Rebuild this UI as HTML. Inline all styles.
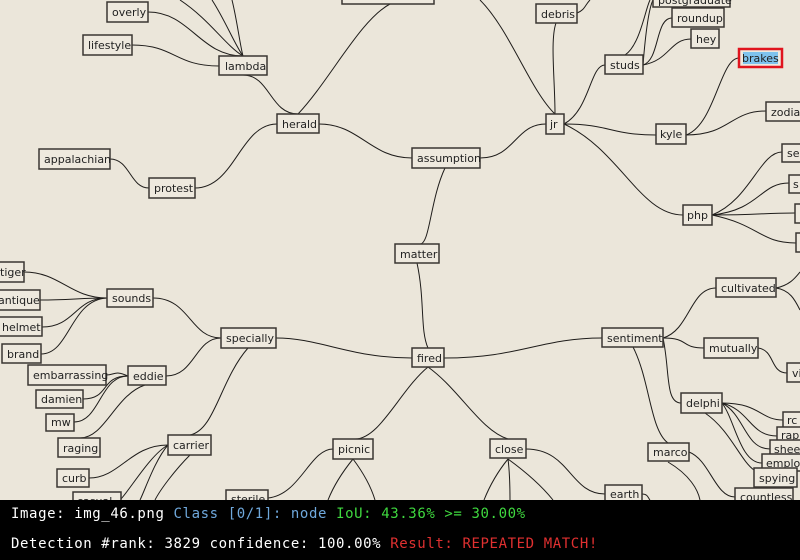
<!DOCTYPE html>
<html><head><meta charset="utf-8"><style>
html,body{margin:0;padding:0;width:800px;height:560px;overflow:hidden;background:#ebe6da;}
svg{display:block}
.n rect{fill:#eee9de;stroke:#3a3632;stroke-width:1.5}
.n text{font-family:"DejaVu Sans","Liberation Sans",sans-serif;font-size:11px;fill:#222;}
.e path{fill:none;stroke:#1e1c1a;stroke-width:1}
#bar{position:absolute;left:0;top:500px;width:800px;height:60px;background:#000;font-family:"DejaVu Sans Mono","Liberation Mono",monospace;font-size:14px;letter-spacing:0.6px;color:#fff;}
#bar div{position:absolute;left:11px;white-space:pre}
</style></head><body>
<svg width="800" height="500" viewBox="0 0 800 500">
<g class="e">
<path d="M243 75 C270 75,270 114,298 114"/>
<path d="M298 114 C330 80,360 20,390 4"/>
<path d="M319 124 C360 124,370 158,412 158"/>
<path d="M195 188 C235 188,240 124,277 124"/>
<path d="M110 159 C130 159,130 188,149 188"/>
<path d="M132 45 C175 45,175 66,219 66"/>
<path d="M148 12 C190 12,200 56,243 56"/>
<path d="M180 0 C210 20,225 45,243 56"/>
<path d="M212 0 C225 20,235 45,243 56"/>
<path d="M232 0 C237 20,240 45,243 56"/>
<path d="M480 158 C515 158,515 124,546 124"/>
<path d="M445 168 C430 200,430 244,420 244"/>
<path d="M417 263 C425 300,420 330,428 348"/>
<path d="M555 114 C555 80,550 40,556 23"/>
<path d="M480 0 C510 30,530 90,555 114"/>
<path d="M564 124 C590 110,590 65,605 65"/>
<path d="M564 124 C610 124,610 135,656 135"/>
<path d="M564 124 C620 150,640 215,683 215"/>
<path d="M625 55 C640 45,645 10,650 0"/>
<path d="M643 65 C660 60,655 18,672 18"/>
<path d="M643 65 C670 60,670 39,691 39"/>
<path d="M643 65 C645 40,648 10,653 0"/>
<path d="M686 135 C715 125,720 58,739 58"/>
<path d="M686 135 C730 135,730 111,766 111"/>
<path d="M712 215 C750 200,760 152,782 152"/>
<path d="M712 215 C760 210,760 183,789 183"/>
<path d="M712 215 C760 215,760 213,795 213"/>
<path d="M712 215 C760 225,760 243,796 243"/>
<path d="M577 13 C585 10,585 5,590 0"/>
<path d="M107 298 C70 298,60 272,24 272"/>
<path d="M107 298 C80 298,70 300,40 300"/>
<path d="M107 298 C75 298,75 327,42 327"/>
<path d="M107 298 C70 300,70 354,41 354"/>
<path d="M153 298 C190 298,190 338,221 338"/>
<path d="M166 376 C195 376,195 338,221 338"/>
<path d="M128 376 C115 370,115 375,106 375"/>
<path d="M128 376 C100 376,110 399,83 399"/>
<path d="M128 376 C100 376,100 422,74 422"/>
<path d="M145 385 C115 395,105 438,80 438"/>
<path d="M248 348 C220 380,215 430,190 435"/>
<path d="M168 445 C130 445,120 478,89 478"/>
<path d="M168 445 C150 455,130 490,120 500"/>
<path d="M168 445 C155 460,145 490,140 500"/>
<path d="M190 455 C175 470,160 490,155 500"/>
<path d="M412 358 C350 358,320 338,276 338"/>
<path d="M444 358 C520 358,540 338,602 338"/>
<path d="M428 367 C400 390,380 439,355 439"/>
<path d="M428 367 C460 390,480 430,508 439"/>
<path d="M268 498 C300 495,310 449,333 449"/>
<path d="M353 459 C340 475,332 490,328 500"/>
<path d="M353 459 C365 475,372 490,375 500"/>
<path d="M508 459 C495 475,488 490,484 500"/>
<path d="M508 459 C510 475,510 490,510 500"/>
<path d="M508 459 C530 475,545 490,553 500"/>
<path d="M526 449 C570 449,570 494,605 494"/>
<path d="M663 338 C690 330,690 288,716 288"/>
<path d="M663 338 C690 338,680 348,704 348"/>
<path d="M663 338 C670 370,665 403,681 403"/>
<path d="M633 347 C650 380,650 430,668 443"/>
<path d="M776 288 C790 285,795 278,800 272"/>
<path d="M776 288 C790 290,795 300,800 310"/>
<path d="M758 348 C775 350,770 373,787 373"/>
<path d="M722 403 C760 403,760 420,783 420"/>
<path d="M722 403 C750 410,750 436,777 436"/>
<path d="M722 403 C745 415,745 449,770 449"/>
<path d="M722 403 C735 420,740 463,762 463"/>
<path d="M705 413 C730 430,740 460,754 470"/>
<path d="M689 452 C710 460,715 497,735 497"/>
<path d="M668 462 C690 475,698 490,700 500"/>
<path d="M642 494 C648 494,648 498,650 500"/>
</g>
<g class="n">
<rect x="342" y="-10" width="92" height="14"/>
<rect x="653" y="-10" width="77" height="17"/><text x="658" y="4">postgraduate</text>
<rect x="107" y="2" width="41" height="20"/><text x="112" y="16">overly</text>
<rect x="83" y="35" width="49" height="20"/><text x="88" y="49">lifestyle</text>
<rect x="219" y="56" width="48" height="19"/><text x="225" y="70">lambda</text>
<rect x="277" y="114" width="42" height="19"/><text x="282" y="128">herald</text>
<rect x="39" y="149" width="71" height="20"/><text x="44" y="163">appalachian</text>
<rect x="149" y="178" width="46" height="20"/><text x="154" y="192">protest</text>
<rect x="412" y="148" width="68" height="20"/><text x="417" y="162">assumption</text>
<rect x="395" y="244" width="44" height="19"/><text x="400" y="258">matter</text>
<rect x="536" y="4" width="41" height="19"/><text x="541" y="18">debris</text>
<rect x="672" y="8" width="52" height="19"/><text x="677" y="22">roundup</text>
<rect x="691" y="29" width="28" height="19"/><text x="696" y="43">hey</text>
<rect x="605" y="55" width="38" height="19"/><text x="610" y="69">studs</text>
<rect x="739" y="49" width="43" height="18" style="stroke:#e0141e;stroke-width:2.5"/>
<rect x="743" y="52" width="35" height="12" style="fill:#7ec3ee;stroke:none"/><text x="742" y="62">brakes</text>
<rect x="546" y="114" width="18" height="20"/><text x="550" y="128">jr</text>
<rect x="766" y="102" width="40" height="19"/><text x="771" y="116">zodiac</text>
<rect x="656" y="124" width="30" height="20"/><text x="660" y="138">kyle</text>
<rect x="782" y="144" width="30" height="18"/><text x="787" y="157">sec</text>
<rect x="789" y="175" width="20" height="18"/><text x="793" y="188">s</text>
<rect x="683" y="205" width="29" height="20"/><text x="687" y="219">php</text>
<rect x="795" y="204" width="20" height="19"/>
<rect x="796" y="233" width="20" height="19"/>
<rect x="-5" y="262" width="29" height="20"/><text x="0" y="276">tiger</text>
<rect x="-5" y="290" width="45" height="20"/><text x="-2" y="304">antique</text>
<rect x="-5" y="317" width="47" height="19"/><text x="2" y="331">helmet</text>
<rect x="2" y="344" width="39" height="19"/><text x="7" y="358">brand</text>
<rect x="107" y="289" width="46" height="18"/><text x="112" y="302">sounds</text>
<rect x="221" y="328" width="55" height="20"/><text x="226" y="342">specially</text>
<rect x="28" y="365" width="78" height="20"/><text x="33" y="379">embarrassing</text>
<rect x="128" y="366" width="38" height="19"/><text x="133" y="380">eddie</text>
<rect x="36" y="390" width="47" height="18"/><text x="41" y="403">damien</text>
<rect x="46" y="414" width="28" height="17"/><text x="51" y="426">mw</text>
<rect x="58" y="438" width="42" height="19"/><text x="63" y="452">raging</text>
<rect x="168" y="435" width="43" height="20"/><text x="173" y="449">carrier</text>
<rect x="57" y="469" width="32" height="18"/><text x="62" y="482">curb</text>
<rect x="73" y="492" width="48" height="18"/><text x="77" y="505">casual</text>
<rect x="226" y="490" width="42" height="18"/><text x="231" y="503">sterile</text>
<rect x="333" y="439" width="40" height="20"/><text x="338" y="453">picnic</text>
<rect x="412" y="348" width="32" height="19"/><text x="417" y="362">fired</text>
<rect x="602" y="328" width="61" height="19"/><text x="607" y="342">sentiment</text>
<rect x="716" y="278" width="60" height="19"/><text x="721" y="292">cultivated</text>
<rect x="704" y="338" width="54" height="20"/><text x="709" y="352">mutually</text>
<rect x="787" y="363" width="25" height="19"/><text x="792" y="377">vi</text>
<rect x="681" y="393" width="41" height="20"/><text x="686" y="407">delphi</text>
<rect x="783" y="412" width="25" height="17"/><text x="787" y="424">rc</text>
<rect x="777" y="427" width="30" height="17"/><text x="781" y="439">rap</text>
<rect x="770" y="440" width="35" height="17"/><text x="774" y="453">sheet</text>
<rect x="762" y="454" width="42" height="17"/><text x="766" y="467">employ</text>
<rect x="754" y="468" width="43" height="19"/><text x="759" y="482">spying</text>
<rect x="648" y="443" width="41" height="18"/><text x="653" y="456">marco</text>
<rect x="490" y="439" width="36" height="19"/><text x="495" y="453">close</text>
<rect x="605" y="485" width="37" height="18"/><text x="610" y="498">earth</text>
<rect x="735" y="488" width="58" height="18"/><text x="740" y="501">countless</text>
</g>
</svg>
<div id="bar">
<div style="top:6px">Image: img_46.png <span style="color:#6fa8dc">Class [0/1]: node</span> <span style="color:#3fd83f">IoU: 43.36% &gt;= 30.00%</span></div>
<div style="top:36px">Detection #rank: 3829 confidence: 100.00% <span style="color:#e03030">Result: REPEATED MATCH!</span></div>
</div>
</body></html>
